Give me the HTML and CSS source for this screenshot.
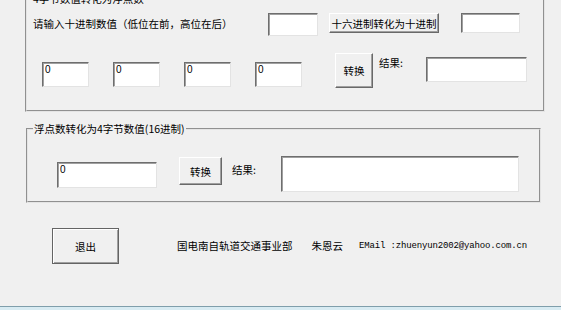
FILE: index.html
```html
<!DOCTYPE html>
<html>

<head>
    <meta charset="utf-8">
    <title>浮点数转换</title>
    <link rel="stylesheet" href="styles.css">
</head>

<body>
    <div class="window">
        <fieldset class="group group-bytes">
            <legend>4字节数值转化为浮点数</legend>
            <div class="row row-top">
                <span class="label label-dec">请输入十进制数值（低位在前，高位在后）</span>
                <input class="field hex-in" type="text" spellcheck="false">
                <button class="btn btn-hex">十六进制转化为十进制</button>
                <input class="field hex-out" type="text" spellcheck="false">
            </div>
            <div class="row row-bytes">
                <input class="field byte first" type="text" value="0" spellcheck="false">
                <input class="field byte" type="text" value="0" spellcheck="false">
                <input class="field byte" type="text" value="0" spellcheck="false">
                <input class="field byte" type="text" value="0" spellcheck="false">
                <button class="btn btn-conv">转换</button>
                <span class="label result">结果:</span>
                <input class="field res-bytes" type="text" spellcheck="false">
            </div>
        </fieldset>

        <fieldset class="group group-float">
            <legend>浮点数转化为4字节数值(16进制)</legend>
            <div class="row row-float">
                <input class="field float-in" type="text" value="0" spellcheck="false">
                <button class="btn btn-conv2">转换</button>
                <span class="label result2">结果:</span>
                <input class="field res-float" type="text" spellcheck="false">
            </div>
        </fieldset>

        <div class="footer">
            <button class="btn btn-exit">退出</button>
            <span class="info dept">国电南自轨道交通事业部</span>
            <span class="info name">朱恩云</span>
            <span class="info mail">EMail :zhuenyun2002@yahoo.com.cn</span>
        </div>

        <div class="taskbar"></div>
    </div>
</body>

</html>
```

FILE: styles.css
```css
html, body {
    margin: 0;
    padding: 0;
}

body {
    width: 561px;
    height: 310px;
    overflow: hidden;
    background-color: #f0f0f0;
    font-family: "Noto Sans CJK SC", "Liberation Sans", sans-serif;
    font-size: 10.5px;
    line-height: 12px;
    color: #000;
}

.window {
    height: 310px;
    display: flex;
    flex-direction: column;
}

/* group boxes */
.group {
    box-sizing: border-box;
    min-width: 0;
    margin: 0;
    padding: 0;
    border: 2px groove #e4e4e4;
}

.group legend {
    padding: 0 1px;
    margin-left: 5px;
    line-height: 12px;
    height: 12px;
}

.group-bytes {
    margin-top: -7px;
    margin-left: 25px;
    width: 520px;
    height: 119px;
}

.group-float {
    margin-top: 11px;
    margin-left: 26px;
    width: 515px;
    height: 80px;
}

.row {
    display: flex;
    align-items: flex-start;
}

.label {
    white-space: nowrap;
}

/* inputs, text sits at the top like the old edit boxes */
.field {
    box-sizing: border-box;
    margin: 0;
    padding: 1px 2px;
    border: 1px solid;
    border-color: #6e6e6e #e3e3e3 #e3e3e3 #6e6e6e;
    box-shadow: inset 1px 1px 0 #a0a0a0;
    background-color: #fff;
    font-family: "Liberation Sans", sans-serif;
    font-size: 10px;
    line-height: 10px;
    vertical-align: top;
    outline: none;
    color: #000;
}

/* buttons */
.btn {
    box-sizing: border-box;
    margin: 0;
    padding: 0;
    border: 1px solid;
    border-color: #fff #696969 #696969 #fff;
    box-shadow: inset -1px -1px 0 #a0a0a0;
    background-color: #f0f0f0;
    font-family: inherit;
    font-size: 10.5px;
    color: #000;
}

/* first group, top row */
.row-top {
    margin-top: 8px;
}

.label-dec {
    margin-left: 6px;
    margin-top: 5px;
    width: 235px;
}

.hex-in {
    width: 50px;
    height: 23px;
}

.btn-hex {
    margin-left: 11px;
    width: 110px;
    height: 20px;
}

.hex-out {
    margin-left: 22px;
    width: 59px;
    height: 20px;
}

/* first group, byte row */
.row-bytes {
    margin-top: 17px;
}

.byte {
    margin-top: 9px;
    margin-left: 24px;
    width: 47px;
    height: 25px;
    padding: 2px 2px 13px;
}

.byte.first {
    margin-left: 15px;
}

.btn-conv {
    margin-left: 33px;
    width: 38px;
    height: 35px;
}

.result {
    margin-left: 6px;
    margin-top: 4px;
    width: 47px;
}

.res-bytes {
    margin-top: 4px;
    width: 101px;
    height: 25px;
}

/* second group */
.row-float {
    margin-top: 21px;
}

.float-in {
    margin-left: 29px;
    margin-top: 6px;
    width: 100px;
    height: 26px;
    padding: 2px 2px 14px;
}

.btn-conv2 {
    margin-left: 22px;
    margin-top: 1px;
    width: 43px;
    height: 28px;
}

.result2 {
    margin-left: 10px;
    margin-top: 8px;
    width: 49px;
}

.res-float {
    width: 238px;
    height: 36px;
}

/* footer */
.footer {
    display: flex;
    align-items: flex-start;
    margin-top: 25px;
}

.btn-exit {
    margin-left: 52px;
    width: 67px;
    height: 36px;
    border-color: #646464;
    box-shadow: inset 1px 1px 0 #fff, inset -1px -1px 0 #a0a0a0;
}

.info {
    margin-top: 12px;
    white-space: nowrap;
}

.dept {
    margin-left: 58px;
}

.name {
    margin-left: 19px;
}

.mail {
    margin-left: 16px;
    font-family: "Liberation Mono", monospace;
    font-size: 9px;
    letter-spacing: -0.15px;
}

.taskbar {
    margin-top: auto;
    height: 3px;
    border-top: 1px solid #7f9eab;
    background-color: #d8ebf2;
}
```
